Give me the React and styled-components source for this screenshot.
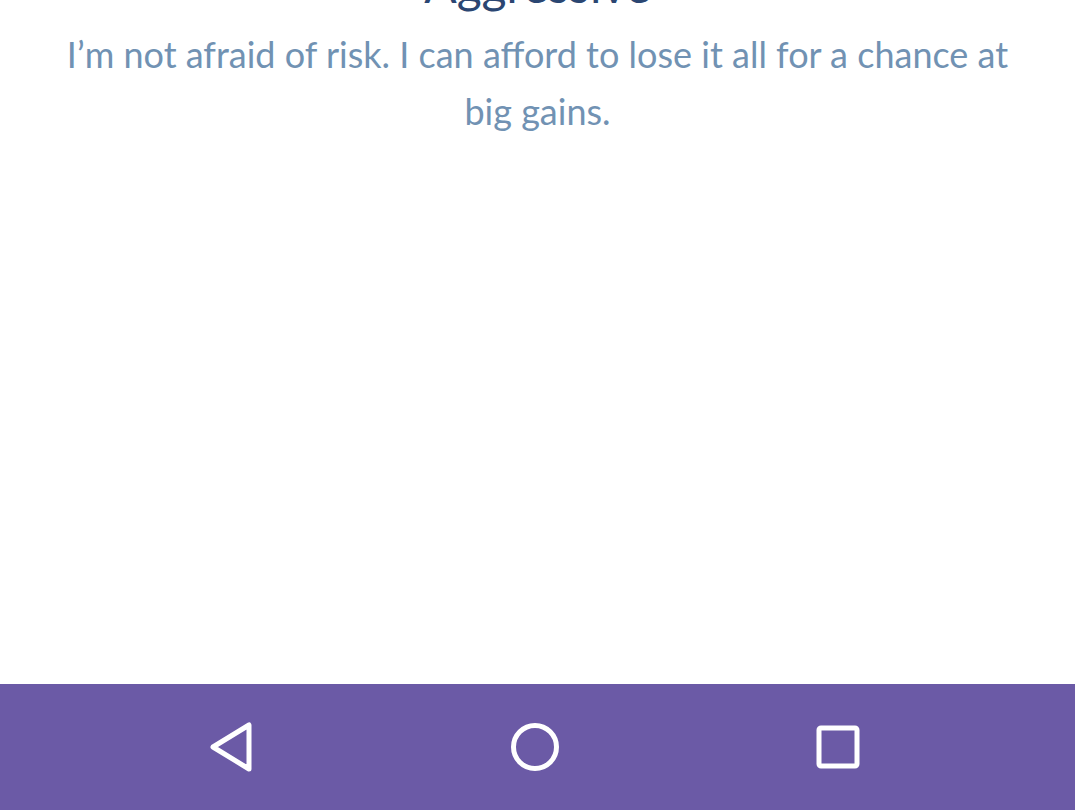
import React from "react";
import styled, { createGlobalStyle } from "styled-components";

const GlobalStyle = createGlobalStyle`
  html, body {
    margin: 0;
    padding: 0;
    background: #ffffff;
    overflow: hidden;
  }
  body {
    font-family: Lato, "Open Sans", sans-serif;
  }
`;

const Screen = styled.div`
  width: 1075px;
  height: 810px;
  display: flex;
  flex-direction: column;
  background: #ffffff;
  overflow: hidden;
`;

const Content = styled.div`
  flex: 1;
  display: flex;
  flex-direction: column;
  align-items: center;
  padding: 0 62px;
`;

const Title = styled.h1`
  margin: -43px 0 0 0;
  font-size: 48px;
  line-height: 56px;
  font-weight: 400;
  color: #2b4672;
  text-align: center;
`;

const Subtitle = styled.p`
  margin: 13px 0 0 0;
  font-size: 36px;
  line-height: 57px;
  color: #7192b3;
  text-align: center;
`;

const NavBar = styled.div`
  height: 126px;
  background: #6b5aa6;
  display: flex;
  align-items: center;
  justify-content: space-between;
  padding: 0 192px 0 186px;
`;

const NavButton = styled.div`
  width: 90px;
  height: 90px;
  display: flex;
  align-items: center;
  justify-content: center;
`;

const App = () => (
  <>
    <GlobalStyle />
    <Screen>
      <Content>
        <Title>Aggressive</Title>
        <Subtitle>
          I’m not afraid of risk. I can afford to lose it all for a chance at big gains.
        </Subtitle>
      </Content>
      <NavBar>
        <NavButton>
          <svg width="50" height="56" viewBox="0 0 50 56">
            <path
              d="M43 6 L43 50 L7 28 Z"
              fill="none"
              stroke="#ffffff"
              strokeWidth="5"
              strokeLinejoin="round"
            />
          </svg>
        </NavButton>
        <NavButton>
          <svg width="56" height="56" viewBox="0 0 56 56">
            <circle cx="28" cy="28" r="21.5" fill="none" stroke="#ffffff" strokeWidth="5" />
          </svg>
        </NavButton>
        <NavButton>
          <svg width="50" height="50" viewBox="0 0 50 50">
            <rect x="6" y="6" width="38" height="38" rx="2" fill="none" stroke="#ffffff" strokeWidth="5" />
          </svg>
        </NavButton>
      </NavBar>
    </Screen>
  </>
);

export default App;
